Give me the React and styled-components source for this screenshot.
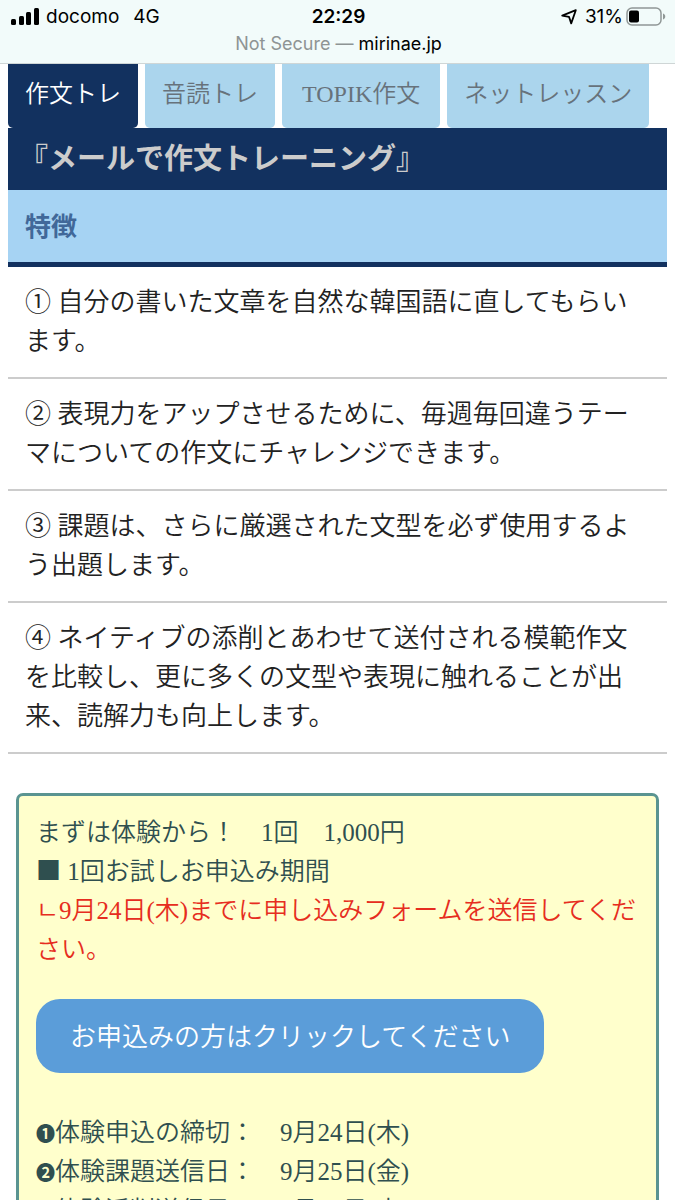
import React from "react";
import styled, { createGlobalStyle } from "styled-components";

const tabs = [
    { id: 1, label: "作文トレ", active: true },
    { id: 2, label: "音読トレ" },
    { id: 3, label: "TOPIK作文", wide: true },
    { id: 4, label: "ネットレッスン" },
];

const features = [
    "① 自分の書いた文章を自然な韓国語に直してもらいます。",
    "② 表現力をアップさせるために、毎週毎回違うテーマについての作文にチャレンジできます。",
    "③ 課題は、さらに厳選された文型を必ず使用するよう出題します。",
    "④ ネイティブの添削とあわせて送付される模範作文を比較し、更に多くの文型や表現に触れることが出来、読解力も向上します。",
];

const schedule = [
    { mark: "❶", text: "体験申込の締切：　9月24日(木)" },
    { mark: "❷", text: "体験課題送信日：　9月25日(金)" },
    { mark: "❸", text: "体験添削送信日：　9月30日(水)" },
];

const SignalIcon = () => (
    <svg width="29" height="18" viewBox="0 0 29 18" aria-hidden="true">
        <rect x="0" y="11" width="5" height="6" rx="1.5" />
        <rect x="8" y="8" width="5" height="9" rx="1.5" />
        <rect x="15" y="4" width="5" height="13" rx="1.5" />
        <rect x="23" y="0" width="5" height="17" rx="1.5" />
    </svg>
);

const LocationIcon = () => (
    <svg width="16" height="16" viewBox="0 0 16 16" fill="none" stroke="#000" strokeWidth="1.8" strokeLinejoin="round" aria-hidden="true">
        <path d="M14.8 1.2 1.2 6.6 8 7.8 10.2 14.4Z" />
    </svg>
);

const BatteryIcon = () => (
    <svg width="40" height="20" viewBox="0 0 40 20" aria-hidden="true">
        <rect x="1" y="1" width="34" height="17" rx="5" fill="none" stroke="#909796" strokeWidth="1.5" />
        <rect x="3" y="3.5" width="10" height="12" rx="2" />
        <path d="M37 6.5c3 1 3 5 0 6z" fill="#909796" />
    </svg>
);

const App = () => {
    return (
        <>
            <GlobalStyle />
            <StatusBar>
                <StatusRow>
                    <StatusGroup>
                        <SignalIcon />
                        <Carrier>docomo</Carrier>
                        <span>4G</span>
                    </StatusGroup>
                    <Clock>22:29</Clock>
                    <StatusGroup $end>
                        <LocationIcon />
                        <Percent>31%</Percent>
                        <BatteryIcon />
                    </StatusGroup>
                </StatusRow>
                <Address>Not Secure — <b>mirinae.jp</b></Address>
            </StatusBar>
            <Page>
                <Tabs>
                    {tabs.map((tab) => (
                        <Tab key={tab.id} type="button" $active={tab.active} $wide={tab.wide}>{tab.label}</Tab>
                    ))}
                </Tabs>
                <Title>『メールで作文トレーニング』</Title>
                <SubTitle>特徴</SubTitle>
                <FeatureList>
                    {features.map((text) => (
                        <Feature key={text}>{text}</Feature>
                    ))}
                </FeatureList>
                <TrialBox>
                    <Line>まずは体験から！　1回　1,000円</Line>
                    <Line><Square>■</Square> 1回お試しお申込み期間</Line>
                    <Line $alert>ㄴ9月24日(木)までに申し込みフォームを送信してください。</Line>
                    <ApplyLink href="#apply">お申込みの方はクリックしてください</ApplyLink>
                    {schedule.map((item) => (
                        <Line key={item.mark}><Mark>{item.mark}</Mark>{item.text}</Line>
                    ))}
                </TrialBox>
            </Page>
        </>
    );
};

export default App;

const GlobalStyle = createGlobalStyle`
    * {
        box-sizing: border-box;
    }

    html {
        scrollbar-width: none;
    }

    body {
        margin: 0;
        background: #fff;
        color: #222;
        font-family: "Liberation Serif", "Noto Sans CJK JP", serif;
        font-weight: 350;
    }
`;

const StatusBar = styled.header`
    height: 64px;
    padding: 6px 9px 0 11px;
    background: #f2fbfa;
    border-bottom: 1px solid #cfd6d6;
    color: #000;
    font-family: Inter, "Liberation Sans", sans-serif;
    font-weight: 400;
`;

const StatusRow = styled.div`
    display: grid;
    grid-template-columns: 1fr auto 1fr;
    align-items: center;
    height: 22px;
    font-size: 19px;
    line-height: 22px;
`;

const StatusGroup = styled.div`
    display: flex;
    align-items: center;
    justify-content: ${(props) => (props.$end ? "flex-end" : "flex-start")};
`;

const Carrier = styled.span`
    margin: 0 14px 0 6px;
`;

const Clock = styled.div`
    font-weight: 600;
`;

const Percent = styled.span`
    margin: 0 3px 0 8px;
`;

const Address = styled.div`
    margin-top: 5px;
    color: #8e9494;
    font-size: 18px;
    line-height: 22px;
    text-align: center;

    b {
        color: #000;
        font-weight: 400;
    }
`;

const Page = styled.main`
    padding: 0 8px;
`;

const Tabs = styled.nav`
    display: flex;
    gap: 7px;
`;

const Tab = styled.button`
    height: 64px;
    padding: 0 ${(props) => (props.$wide ? "20px" : "17px")} 10px;
    border: 0;
    border-radius: 0 0 5px 5px;
    background: ${(props) => (props.$active ? "#12315f" : "#abd5ed")};
    color: ${(props) => (props.$active ? "#fff" : "#67727b")};
    font-family: inherit;
    font-size: 24px;
    font-weight: inherit;
    white-space: nowrap;
    cursor: pointer;
`;

const Title = styled.h1`
    margin: 0;
    padding: 11px;
    background: #12315f;
    color: #ccc;
    font-size: 29px;
    font-weight: 700;
    line-height: 40px;
`;

const SubTitle = styled.h2`
    margin: 0;
    padding: 18px 17px 14px;
    background: #a6d3f3;
    border-bottom: 5px solid #12315f;
    color: #416899;
    font-size: 26px;
    font-weight: 700;
    line-height: 40px;
`;

const FeatureList = styled.ul`
    margin: 0;
    padding: 0;
    list-style: none;
`;

const Feature = styled.li`
    padding: 16px 20px 16px 17px;
    border-bottom: 2px solid #ccc;
    font-size: 26px;
    line-height: 39px;
`;

const TrialBox = styled.section`
    margin: 39px 8px;
    padding: 17px;
    border: 3px solid #5a9491;
    border-radius: 7px;
    background: #ffffcc;
    color: #2f4f4f;
`;

const Line = styled.p`
    margin: 0;
    color: ${(props) => (props.$alert ? "#e62d20" : "inherit")};
    font-size: 25px;
    line-height: 39px;
`;

const Square = styled.span`
    font-family: "Noto Sans CJK JP", sans-serif;
    line-height: 1;
`;

const Mark = styled.span`
    font-size: 19px;
    font-weight: 700;
    line-height: 1;
`;

const ApplyLink = styled.a`
    display: table;
    margin: 30px 0 40px;
    padding: 19px 34px 15px;
    border-radius: 24px;
    background: #5b9dd9;
    color: #fff;
    font-size: 26px;
    line-height: 40px;
    text-decoration: none;
`;
